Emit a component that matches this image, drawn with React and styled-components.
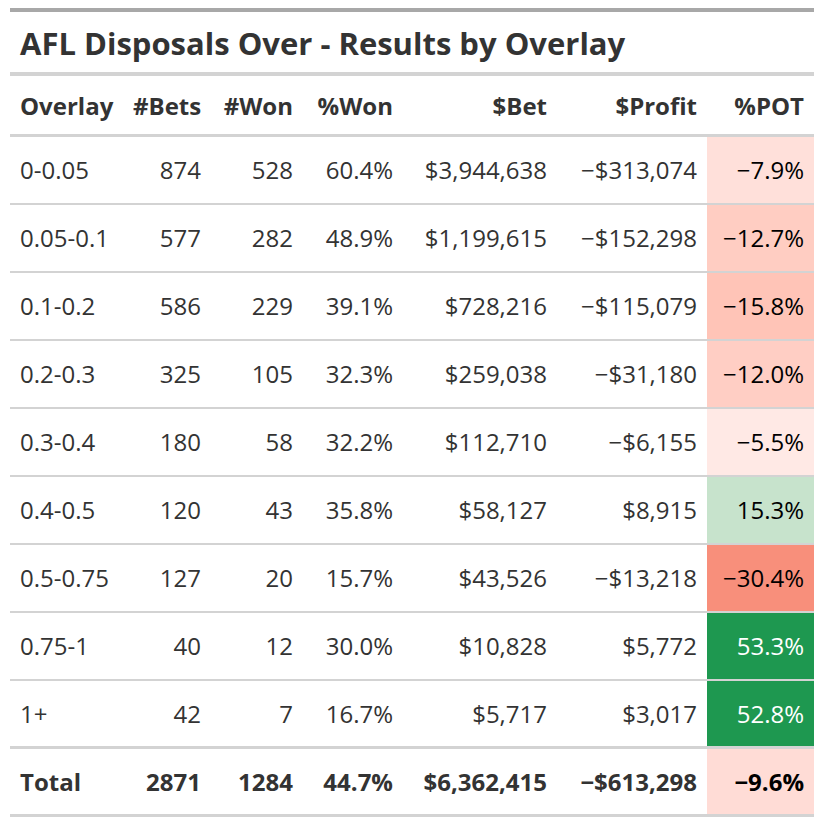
import React from "react";
import styled, { createGlobalStyle } from "styled-components";

const Global = createGlobalStyle`
  html, body { margin: 0; padding: 0; background: #ffffff; }
  body { padding: 8px 0 0 10px; font-family: "Open Sans", "Noto Sans", sans-serif; }
`;

const Table = styled.table`
  width: 804px;
  table-layout: fixed;
  border-collapse: collapse;
  color: #333333;
  font-size: 24px;
  border-top: 4px solid #a8a8a8;
  border-bottom: 3px solid #d3d3d3;
`;

const TitleCell = styled.th`
  text-align: left;
  font-size: 31px;
  font-weight: 700;
  height: 58px;
  padding: 2px 10px 0;
  border-bottom: 4px solid #d3d3d3;
  color: #333333;
  white-space: nowrap;
`;

const HeadCell = styled.th`
  height: 58px;
  padding: 0 10px;
  font-weight: 700;
  text-align: ${(p) => (p.$left ? "left" : "right")};
  border-bottom: 3px solid #d3d3d3;
  white-space: nowrap;
`;

const Row = styled.tr`
  height: 68px;
  border-top: ${(p) => (p.$total ? "3px" : "2px")} solid #d3d3d3;
`;

const Cell = styled.td`
  padding: 0 10px;
  white-space: nowrap;
  text-align: ${(p) => (p.$left ? "left" : "right")};
  font-weight: ${(p) => (p.$bold ? 700 : 400)};
  background: ${(p) => p.$bg || "transparent"};
  color: ${(p) => p.$color || "inherit"};
`;

const rows = [
  ["0-0.05", "874", "528", "60.4%", "$3,944,638", "−$313,074", "−7.9%", "#ffe0da", "#000000"],
  ["0.05-0.1", "577", "282", "48.9%", "$1,199,615", "−$152,298", "−12.7%", "#ffcdc2", "#000000"],
  ["0.1-0.2", "586", "229", "39.1%", "$728,216", "−$115,079", "−15.8%", "#ffc4b7", "#000000"],
  ["0.2-0.3", "325", "105", "32.3%", "$259,038", "−$31,180", "−12.0%", "#ffcec4", "#000000"],
  ["0.3-0.4", "180", "58", "32.2%", "$112,710", "−$6,155", "−5.5%", "#ffe9e5", "#000000"],
  ["0.4-0.5", "120", "43", "35.8%", "$58,127", "$8,915", "15.3%", "#c7e3cc", "#000000"],
  ["0.5-0.75", "127", "20", "15.7%", "$43,526", "−$13,218", "−30.4%", "#f88f7b", "#000000"],
  ["0.75-1", "40", "12", "30.0%", "$10,828", "$5,772", "53.3%", "#1e9850", "#ffffff"],
  ["1+", "42", "7", "16.7%", "$5,717", "$3,017", "52.8%", "#1e9850", "#ffffff"],
];

const total = ["Total", "2871", "1284", "44.7%", "$6,362,415", "−$613,298", "−9.6%", "#ffdcd6", "#000000"];

const headers = ["Overlay", "#Bets", "#Won", "%Won", "$Bet", "$Profit", "%POT"];
const widths = [113, 88, 92, 100, 154, 150, 107];

function DataRow({ r, isTotal }) {
  return (
    <Row $total={isTotal}>
      {r.slice(0, 6).map((v, i) => (
        <Cell key={i} $left={i === 0} $bold={isTotal}>
          {v}
        </Cell>
      ))}
      <Cell $bold={isTotal} $bg={r[7]} $color={r[8]}>
        {r[6]}
      </Cell>
    </Row>
  );
}

export default function App() {
  return (
    <>
      <Global />
      <Table>
        <colgroup>
          {widths.map((w, i) => (
            <col key={i} style={{ width: w }} />
          ))}
        </colgroup>
        <thead>
          <tr>
            <TitleCell colSpan={7}>AFL Disposals Over - Results by Overlay</TitleCell>
          </tr>
          <tr>
            {headers.map((h, i) => (
              <HeadCell key={h} $left={i === 0}>
                {h}
              </HeadCell>
            ))}
          </tr>
        </thead>
        <tbody>
          {rows.map((r) => (
            <DataRow key={r[0]} r={r} />
          ))}
          <DataRow r={total} isTotal />
        </tbody>
      </Table>
    </>
  );
}
